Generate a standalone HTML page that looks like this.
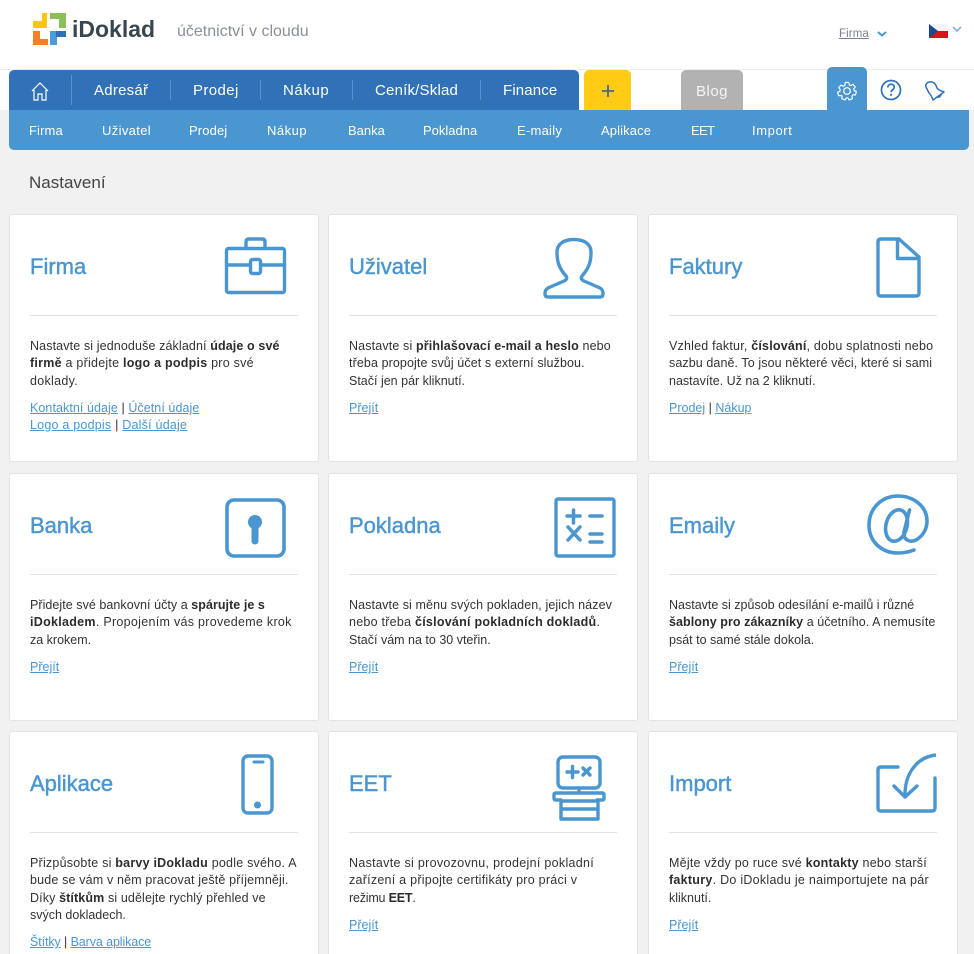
<!DOCTYPE html>
<html lang="cs"><head><meta charset="utf-8"><title>iDoklad</title>
<style>
html,body{margin:0;padding:0;width:974px;height:954px;overflow:hidden}
body{position:relative;background:#f1f1f1;font-family:"Liberation Sans",sans-serif;color:#333}
#root{position:absolute;left:0;top:0;width:974px;height:954px;overflow:hidden}
.a{position:absolute;white-space:nowrap}
#top{left:0;top:0;width:974px;height:110px;background:#fff}
#line{left:0;top:69px;width:974px;height:1px;background:#eee}
#nav{left:9px;top:70px;width:570px;height:40px;background:#3071b7;border-radius:5px 5px 0 0}
#sub{left:9px;top:110px;width:960px;height:40px;background:#4a96d0;border-radius:0 0 5px 5px}
.n{color:#fff;font-size:15px;top:82px;line-height:18px;letter-spacing:.25px}
.s{color:#fff;font-size:13px;top:123px;line-height:16px;letter-spacing:.12px}
.sep{width:1px;background:#5a92cb;top:80px;height:20px}
.card{position:absolute;width:308px;height:246px;background:#fff;border:1px solid #e3e3e3;border-radius:3px}
.card h2{position:absolute;left:20px;top:38px;margin:0;font-size:22px;line-height:28px;font-weight:normal;color:#4a96d0;-webkit-text-stroke:.45px #4a96d0;white-space:nowrap}
.card hr{position:absolute;left:20px;top:100px;width:268px;height:1px;margin:0;border:0;background:#e3e3e3}
.card p{position:absolute;left:20px;top:123px;margin:0;font-size:12.5px;line-height:17.3px;color:#333;white-space:nowrap}
.card p b{color:#2c2c2c}
.card .l{position:absolute;left:20px;font-size:12.5px;line-height:17px;color:#333;white-space:nowrap}
.card a{color:#4a96d0;text-decoration:underline}
.card svg{position:absolute;left:0;top:0;overflow:visible}
svg .i{fill:none;stroke:#4a96d0;stroke-width:3.4;stroke-linecap:round;stroke-linejoin:round}
</style></head><body><div id="root">
<div class="a" id="top"></div><div class="a" id="line"></div>

<svg class="a" style="left:0;top:0" width="80" height="60">
<path fill="#fdc513" d="M42 13h5v15H33v-7h9z"/>
<path fill="#8cbe5a" d="M50 13h16v15h-7v-9h-9z"/>
<path fill="#f37f26" d="M33 31h7v8h8v6H33z"/>
<path fill="#4f9ad8" d="M50 31h7v14h-7z"/>
<path fill="#2f6fb5" d="M56 31h10v6H56z"/>
</svg>
<div class="a" style="left:72px;top:16px;font-size:23px;line-height:27px;font-weight:bold;color:#37474f">iDoklad</div>
<div class="a" style="left:177px;top:23px;font-size:16px;line-height:18px;color:#8a8f96">účetnictví v cloudu</div>
<div class="a" style="left:839px;top:27px;font-size:11.5px;line-height:15px;color:#7a7f88;text-decoration:underline;letter-spacing:.1px">Firma</div>
<svg class="a" style="left:875px;top:30px" width="14" height="10"><path d="M3 2l4 3.500L11 2" fill="none" stroke="#4a96d0" stroke-width="2"/></svg>
<svg class="a" style="left:929px;top:23px" width="36" height="16">
<rect x="0" y="1" width="19" height="7" fill="#f4f4f8"/><rect x="0" y="8" width="19" height="7" fill="#d7141a"/><path d="M0 1l9 7-9 7z" fill="#1a4a8e"/>
<path d="M24 4l4 4 4-4" fill="none" stroke="#7fb5e0" stroke-width="1.600"/></svg>

<div class="a" id="nav"></div><div class="a" id="sub"></div>
<svg class="a" style="left:30px;top:80px" width="20" height="22"><path d="M2 11l8-8 8 8M4 10v10h4v-6h4v6h4V10" fill="none" stroke="#fff" stroke-width="1.200"/></svg>
<div class="a sep" style="left:71px;top:75px;height:30px"></div>
<div class="a n" style="left:94px">Adresář</div>
<div class="a sep" style="left:170px"></div>
<div class="a n" style="left:193px;letter-spacing:.4px">Prodej</div>
<div class="a sep" style="left:260px"></div>
<div class="a n" style="left:283px;letter-spacing:.6px">Nákup</div>
<div class="a sep" style="left:352px"></div>
<div class="a n" style="left:375px;letter-spacing:.2px">Ceník/Sklad</div>
<div class="a sep" style="left:480px"></div>
<div class="a n" style="left:503px;letter-spacing:.15px">Finance</div>
<div class="a" style="left:584px;top:70px;width:47px;height:40px;background:#ffcb14;border-radius:5px 5px 0 0"></div>
<svg class="a" style="left:600px;top:83px" width="16" height="16"><path d="M2 8h12M8 2v12" stroke="#3f6a8c" stroke-width="1.800"/></svg>
<div class="a" style="left:681px;top:70px;width:62px;height:40px;background:#b2b2b2;border-radius:5px 5px 0 0"></div>
<div class="a n" style="left:696px;top:83px;color:#f5f5f5;letter-spacing:.5px">Blog</div>
<div class="a" style="left:827px;top:67px;width:40px;height:43px;background:#4a96d0;border-radius:5px 5px 0 0"></div>
<svg class="a" style="left:836px;top:80px" width="22" height="22" viewBox="0 0 22 22"><circle cx="11" cy="11" r="3.300" fill="none" stroke="#fff" stroke-width="1.200"/><path d="M9 1.500h4l.5 2.700 1.800.8 2.300-1.500 2.600 3-1.700 2.100.4 1.900 2.500 1-1 3.900-2.700-.2-1.200 1.500.6 2.700-3.600 1.600-1.400-2.300h-2l-1.400 2.300-3.600-1.600.6-2.700L4.300 16l-2.700.2-1-3.900 2.500-1 .4-1.900L1.800 7.300l2.600-3 2.300 1.500 1.800-.8z" transform="translate(1.100 1.100) scale(.9)" fill="none" stroke="#fff" stroke-width="1.300" stroke-linejoin="round"/></svg>
<svg class="a" style="left:880px;top:79px" width="22" height="22"><circle cx="11" cy="11" r="9.500" fill="none" stroke="#3071b7" stroke-width="1.700"/><path d="M7.800 8.500c0-4.300 6.500-4.300 6.500-.3 0 2.300-3.200 2.500-3.200 5" fill="none" stroke="#3071b7" stroke-width="1.700"/><circle cx="11" cy="15.800" r="1.100" fill="#3071b7"/></svg>
<svg class="a" style="left:924px;top:80px" width="22" height="22"><path d="M3 9C0 5 3 1 8 2C11 3 12 5 13 8C14 10 17 11 20 12L9 20C8 17 7 15 5 13ZM13 17a3 3 0 0 0 4-3" fill="none" stroke="#3071b7" stroke-width="1.500" stroke-linejoin="round"/></svg>

<div class="a s" style="left:29px">Firma</div>
<div class="a s" style="left:102px;letter-spacing:.35px">Uživatel</div>
<div class="a s" style="left:189px">Prodej</div>
<div class="a s" style="left:267px;letter-spacing:.5px">Nákup</div>
<div class="a s" style="left:348px;letter-spacing:0">Banka</div>
<div class="a s" style="left:423px;letter-spacing:0">Pokladna</div>
<div class="a s" style="left:517px;letter-spacing:.25px">E-maily</div>
<div class="a s" style="left:601px">Aplikace</div>
<div class="a s" style="left:691px;letter-spacing:-.7px">EET</div>
<div class="a s" style="left:752px;letter-spacing:.6px">Import</div>

<div class="a" style="left:29px;top:173px;font-size:17px;line-height:20px;color:#444">Nastavení</div>

<div class="card" style="left:9px;top:214px"><h2>Firma</h2><hr>
<p><span style="letter-spacing:.12px">Nastavte si jednoduše základní <b>údaje o své</b></span><br><span style="letter-spacing:.24px"><b>firmě</b> a přidejte <b>logo a podpis</b> pro své</span><br><span style="letter-spacing:.3px">doklady.</span></p>
<div class="l" style="top:185px;letter-spacing:.07px"><a>Kontaktní údaje</a> | <a>Účetní údaje</a></div>
<div class="l" style="top:202px;letter-spacing:.22px"><a>Logo a podpis</a> | <a>Další údaje</a></div>
<svg width="308" height="100"><g class="i" transform="translate(-10 -215)"><rect x="226.500" y="248.500" width="58" height="44" rx="2"/><path d="M246 248v-6q0-3 3-3h13q3 0 3 3v6M227 265h23M261 265h23"/><rect x="250.500" y="259.500" width="10" height="14" rx="2"/></g></svg></div>

<div class="card" style="left:328px;top:214px"><h2>Uživatel</h2><hr>
<p><span style="letter-spacing:.14px">Nastavte si <b>přihlašovací e-mail a heslo</b> nebo</span><br><span style="letter-spacing:.1px">třeba propojte svůj účet s externí službou.</span><br>Stačí jen pár kliknutí.</p>
<div class="l" style="top:185px"><a>Přejít</a></div>
<svg width="308" height="100"><path class="i" transform="translate(-329 -215)" d="M566 276C559 268 557 262 557 252C557 244 564 239.500 574 239.500C584 239.500 591 244 591 252C591 262 589 268 582 276Q580 279 584 281L600 288Q603 290 603 293V294Q603 297 600 297H548Q545 297 545 294V293Q545 290 548 288L564 281Q568 279 566 276Z"/></svg></div>

<div class="card" style="left:648px;top:214px"><h2>Faktury</h2><hr>
<p><span style="letter-spacing:.2px">Vzhled faktur, <b>číslování</b>, dobu splatnosti nebo</span><br><span style="letter-spacing:.09px">sazbu daně. To jsou některé věci, které si sami</span><br>nastavíte. Už na 2 kliknutí.</p>
<div class="l" style="top:185px"><a>Prodej</a> | <a>Nákup</a></div>
<svg width="308" height="100"><path class="i" transform="translate(-649 -215)" d="M899 239H881Q878 239 878 242V293Q878 296 881 296H916Q919 296 919 293V257ZM897.500 240V258.500H918"/></svg></div>

<div class="card" style="left:9px;top:473px"><h2>Banka</h2><hr>
<p><span style="letter-spacing:.05px">Přidejte své bankovní účty a <b>spárujte je s</b></span><br><span style="letter-spacing:.29px"><b>iDokladem</b>. Propojením vás provedeme krok</span><br>za krokem.</p>
<div class="l" style="top:185px"><a>Přejít</a></div>
<svg width="308" height="100"><g transform="translate(-10 -474)"><rect class="i" style="stroke-width:3.600" x="227" y="500" width="57" height="56" rx="7"/><circle cx="255" cy="522" r="7" fill="#4a96d0"/><path d="M255 524v17" stroke="#4a96d0" stroke-width="7" stroke-linecap="round"/></g></svg></div>

<div class="card" style="left:328px;top:473px"><h2>Pokladna</h2><hr>
<p><span style="letter-spacing:.1px">Nastavte si měnu svých pokladen, jejich název</span><br><span style="letter-spacing:.25px">nebo třeba <b>číslování pokladních dokladů</b>.</span><br>Stačí vám na to 30 vteřin.</p>
<div class="l" style="top:185px"><a>Přejít</a></div>
<svg width="308" height="100"><g class="i" transform="translate(-329 -474)"><rect x="556" y="499" width="58" height="57" rx="2"/><path style="stroke-width:3.500" d="M567 516h13M573.500 510v13M590 516h12M568 527l12 13M580 527l-12 13M590 534h12M590 542h12"/></g></svg></div>

<div class="card" style="left:648px;top:473px"><h2>Emaily</h2><hr>
<p>Nastavte si způsob odesílání e-mailů i různé<br><span style="letter-spacing:.07px"><b>šablony pro zákazníky</b> a účetního. A nemusíte</span><br>psát to samé stále dokola.</p>
<div class="l" style="top:185px"><a>Přejít</a></div>
<svg width="308" height="100"><g class="i" style="stroke-width:3.600" transform="translate(-649 -474)"><ellipse cx="896.500" cy="525.500" rx="10.500" ry="16" transform="rotate(15 896.500 525.500)"/><path d="M909.500 510L904 532C903 540 910 543 916 540C923 536 927 529 927 521C927 506 913 496 898 496C881 496 869 509 869 525C869 542 882 553 898 553C904 553 909 552 914 550"/></g></svg></div>

<div class="card" style="left:9px;top:731px"><h2>Aplikace</h2><hr>
<p><span style="letter-spacing:.22px">Přizpůsobte si <b>barvy iDokladu</b> podle svého. A</span><br><span style="letter-spacing:.16px">bude se vám v něm pracovat ještě příjemněji.</span><br><span style="letter-spacing:.12px">Díky <b>štítkům</b> si udělejte rychlý přehled ve</span><br>svých dokladech.</p>
<div class="l" style="top:202px;letter-spacing:-.1px"><a>Štítky</a> | <a>Barva aplikace</a></div>
<svg width="308" height="100"><g transform="translate(-10 -732)"><rect class="i" x="243" y="756" width="29" height="57" rx="5"/><path d="M254 762h9" stroke="#4a96d0" stroke-width="3" stroke-linecap="round"/><circle cx="257.500" cy="805" r="3.500" fill="#4a96d0"/></g></svg></div>

<div class="card" style="left:328px;top:731px"><h2>EET</h2><hr>
<p><span style="letter-spacing:.3px">Nastavte si provozovnu, prodejní pokladní</span><br><span style="letter-spacing:.25px">zařízení a připojte certifikáty pro práci v</span><br><span style="letter-spacing:-.2px">režimu <b>EET</b>.</span></p>
<div class="l" style="top:185px"><a>Přejít</a></div>
<svg width="308" height="100"><g class="i" transform="translate(-329 -732)"><rect x="558" y="757" width="42" height="31" rx="5"/><path d="M579 788v5M561 800H556Q554 800 554 798V795Q554 793 556 793H602Q604 793 604 795V798Q604 800 602 800H597"/><path d="M561 801H598V819H561ZM561 809H598"/><path style="stroke-width:3.400" d="M567 772h11M572.500 766.500v11M583 768l7 7M590 768l-7 7"/></g></svg></div>

<div class="card" style="left:648px;top:731px"><h2>Import</h2><hr>
<p><span style="letter-spacing:.23px">Mějte vždy po ruce své <b>kontakty</b> nebo starší</span><br><span style="letter-spacing:.27px"><b>faktury</b>. Do iDokladu je naimportujete na pár</span><br>kliknutí.</p>
<div class="l" style="top:185px"><a>Přejít</a></div>
<svg width="308" height="100"><g class="i" transform="translate(-649 -732)"><path style="stroke-linecap:butt" d="M936 755C918 757 905 772 905 795"/><path d="M894 786L905 797L917 786M898 767H881Q878 767 878 770V808Q878 811 881 811H932Q935 811 935 808V778"/></g></svg></div>
</div></body></html>
